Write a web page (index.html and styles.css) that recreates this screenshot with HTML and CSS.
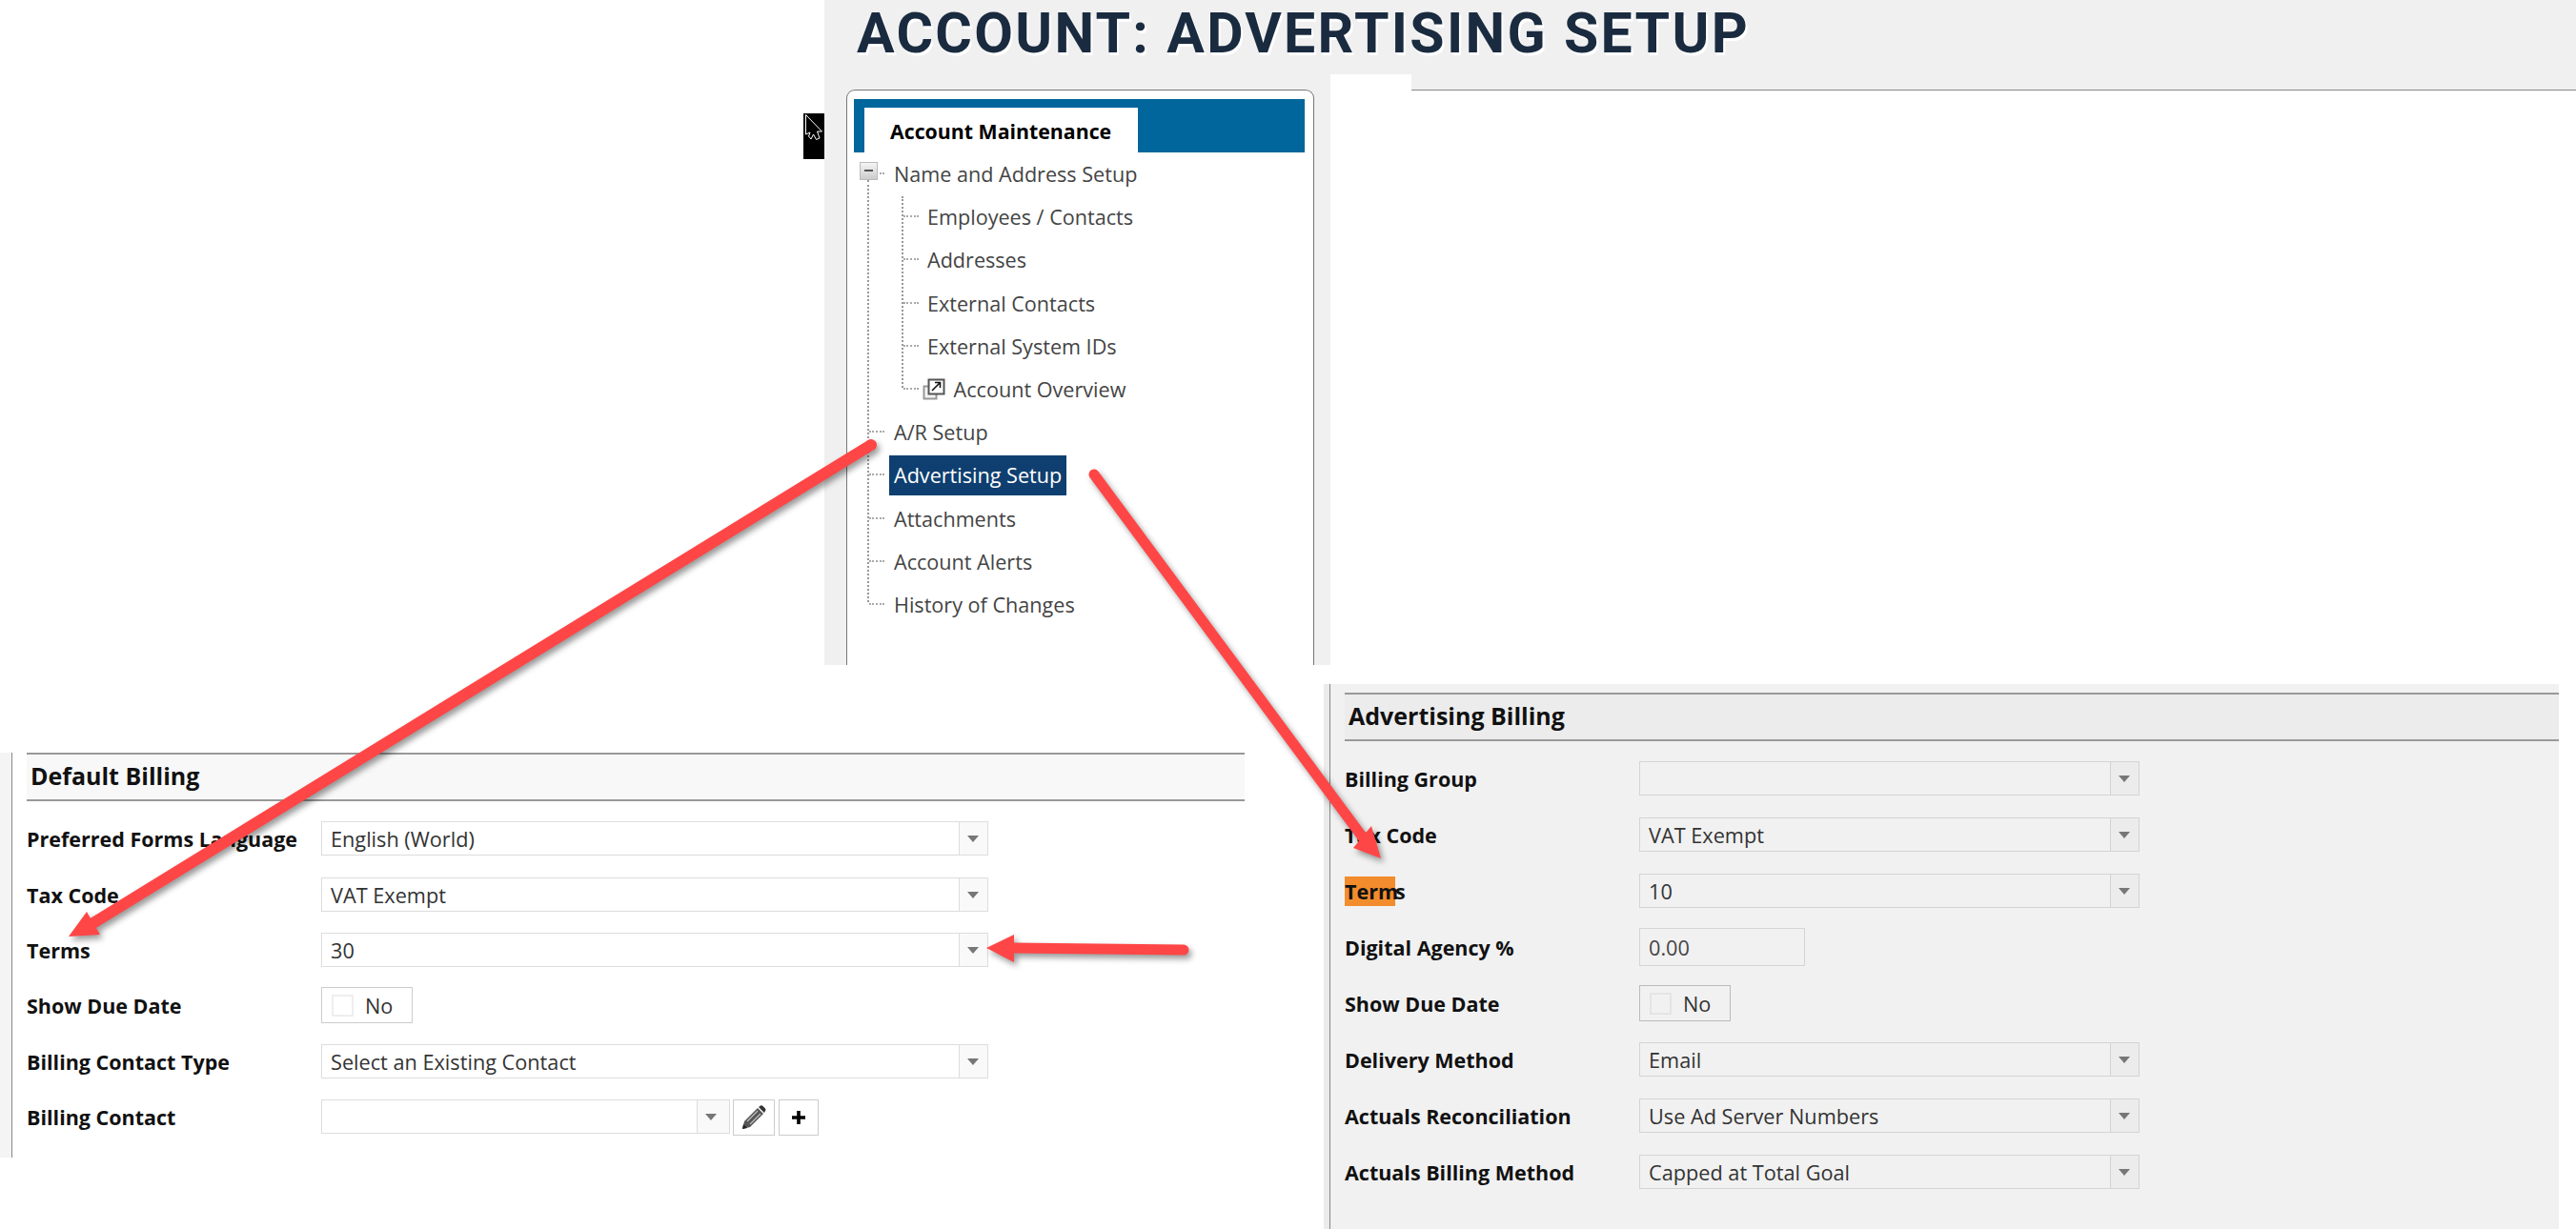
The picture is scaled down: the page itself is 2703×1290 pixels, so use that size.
FILE: index.html
```html
<!DOCTYPE html>
<html lang="en">
<head>
    <meta charset="UTF-8" />
    <title>Account: Advertising Setup</title>
    <link rel="stylesheet" href="styles.css">
</head>
<body>
<div class="page">

    <div class="top">
        <div class="cursor-strip">
            <svg width="22" height="48" viewBox="0 0 22 48">
                <path d="M2.5 1.5 L19.5 19 L14.5 19 L17 26 L13.5 27.5 L10.5 22 L8 27 L5.5 24 L7 20 L2.5 22 Z" fill="#000" stroke="#fff" stroke-width="1"/>
            </svg>
        </div>
        <div class="shot">
            <h1 class="title">ACCOUNT: ADVERTISING SETUP</h1>
            <div class="shot-body">
                <div class="side">
                    <div class="card">
                        <div class="card-head"><div class="card-tab">Account Maintenance</div></div>
                        <ul class="tree">
                            <li>
                                <span class="toggle"></span>
                                Name and Address Setup
                            </li>
                            <li class="sub-holder">
                                <ul class="sub">
                                    <li>Employees / Contacts</li>
                                    <li>Addresses</li>
                                    <li>External Contacts</li>
                                    <li>External System IDs</li>
                                    <li class="with-icon">
                                        <svg width="25" height="23" viewBox="0 0 25 23">
                                            <rect x="1.5" y="8.5" width="13" height="13" fill="#f4f4f4" stroke="#999" stroke-width="2"/>
                                            <rect x="6.5" y="1.5" width="16" height="15" fill="#fff" stroke="#555" stroke-width="2"/>
                                            <path d="M10 13 L18 5 M13 4.5 H18.5 V10" fill="none" stroke="#111" stroke-width="1.6"/>
                                        </svg>
                                        Account Overview
                                    </li>
                                </ul>
                            </li>
                            <li>A/R Setup</li>
                            <li><span class="selected">Advertising Setup</span></li>
                            <li>Attachments</li>
                            <li>Account Alerts</li>
                            <li>History of Changes</li>
                        </ul>
                    </div>
                </div>
                <div class="content">
                    <div class="content-tab"></div>
                    <div class="content-rest"></div>
                </div>
            </div>
        </div>
    </div>

    <div class="bottom">
        <div class="left-col">
            <div class="form form-default">
                <div class="form-head">Default Billing</div>
                <div class="rows">
                    <div class="row">
                        <label>Preferred Forms Language</label>
                        <div class="select"><span>English (World)</span><i class="drop"></i></div>
                    </div>
                    <div class="row">
                        <label>Tax Code</label>
                        <div class="select"><span>VAT Exempt</span><i class="drop"></i></div>
                    </div>
                    <div class="row">
                        <label>Terms</label>
                        <div class="select"><span>30</span><i class="drop"></i></div>
                    </div>
                    <div class="row">
                        <label>Show Due Date</label>
                        <div class="switch"><b></b>No</div>
                    </div>
                    <div class="row">
                        <label>Billing Contact Type</label>
                        <div class="select"><span>Select an Existing Contact</span><i class="drop"></i></div>
                    </div>
                    <div class="row">
                        <label>Billing Contact</label>
                        <div class="select select-short"><span></span><i class="drop"></i></div>
                        <button class="icon-btn btn-edit">
                            <svg width="26" height="26" viewBox="0 0 26 26">
                                <path d="M1 25 L3 17 L17 3 L23 9 L9 23 Z" fill="#555"/>
                                <path d="M18 2 L20 0.5 Q21.5 0 22.5 1 L25 3.5 Q26 5 25 6 L24 8 Z" fill="#333"/>
                                <path d="M6 17 L17 6 M9 20 L20 9" stroke="#bbb" stroke-width="1.4"/>
                                <path d="M1 25 L2 20 L6 24 Z" fill="#222"/>
                            </svg>
                        </button>
                        <button class="icon-btn btn-add">
                            <svg width="16" height="16" viewBox="0 0 16 16">
                                <path d="M8 1 V15 M1 8 H15" stroke="#000" stroke-width="3.6"/>
                            </svg>
                        </button>
                    </div>
                </div>
            </div>
        </div>
        <div class="right-col">
            <div class="form-head">Advertising Billing</div>
            <div class="rows">
                <div class="row">
                    <label>Billing Group</label>
                    <div class="select"><span></span><i class="drop"></i></div>
                </div>
                <div class="row">
                    <label>Tax Code</label>
                    <div class="select"><span>VAT Exempt</span><i class="drop"></i></div>
                </div>
                <div class="row">
                    <label><mark>Term</mark>s</label>
                    <div class="select"><span>10</span><i class="drop"></i></div>
                </div>
                <div class="row">
                    <label>Digital Agency %</label>
                    <div class="input-box">0.00</div>
                </div>
                <div class="row">
                    <label>Show Due Date</label>
                    <div class="switch"><b></b>No</div>
                </div>
                <div class="row">
                    <label>Delivery Method</label>
                    <div class="select"><span>Email</span><i class="drop"></i></div>
                </div>
                <div class="row">
                    <label>Actuals Reconciliation</label>
                    <div class="select"><span>Use Ad Server Numbers</span><i class="drop"></i></div>
                </div>
                <div class="row">
                    <label>Actuals Billing Method</label>
                    <div class="select"><span>Capped at Total Goal</span><i class="drop"></i></div>
                </div>
            </div>
        </div>
    </div>

    <!-- red callout arrows drawn over the screenshots -->
    <svg class="arrows" width="2703" height="1290" viewBox="0 0 2703 1290">
        <g class="arrow">
            <path d="M914 467 L96 970" stroke="#ff4646" stroke-width="12" stroke-linecap="round" fill="none"/>
            <path d="M72 983 L91 957 L105 981 Z" fill="#ff4646"/>
        </g>
        <g class="arrow">
            <path d="M1148 498 L1430 879" stroke="#ff4646" stroke-width="11" stroke-linecap="round" fill="none"/>
            <path d="M1449 901 L1420 890 L1439 867 Z" fill="#ff4646"/>
        </g>
        <g class="arrow">
            <path d="M1242 997 L1062 995" stroke="#ff4646" stroke-width="11" stroke-linecap="round" fill="none"/>
            <path d="M1035 995 L1064 981 L1064 1010 Z" fill="#ff4646"/>
        </g>
    </svg>
</div>
</body>
</html>
```

FILE: styles.css
```css
* {
  box-sizing: border-box;
}
body {
  margin: 0;
  background: #fff;
  font-family: "Open Sans", "Noto Sans", sans-serif;
  color: #333;
}
.page {
  position: relative;
  width: 2703px;
  height: 1290px;
  overflow: hidden;
}

/* top screenshot */
.top {
  display: flex;
  height: 698px;
  padding-left: 843px;
}
.cursor-strip {
  width: 22px;
  height: 48px;
  margin-top: 119px;
  background: #000;
}
.cursor-strip svg {
  display: block;
}
.shot {
  flex: 1;
  background: #f0f0f0;
}
.title {
  height: 94px;
  margin: 0;
  padding-left: 34px;
  font-family: Roboto, "Open Sans", sans-serif;
  font-size: 59px;
  font-weight: 700;
  letter-spacing: 2.3px;
  line-height: 70px;
  color: #1a2b40;
  text-shadow: 2px 3px 0 #fff;
  white-space: nowrap;
}
.shot-body {
  display: flex;
  height: 604px;
}
.side {
  width: 531px;
  padding-left: 23px;
}
.card {
  width: 491px;
  height: 604px;
  background: #fff;
  border: 1px solid #777;
  border-bottom: none;
  border-radius: 9px 9px 0 0;
  padding-top: 9px;
}
.card-head {
  height: 56px;
  margin: 0 9px 0 7px;
  padding: 9px 0 0 11px;
  background: #00669b;
}
.card-tab {
  width: 287px;
  height: 47px;
  padding-left: 27px;
  background: #fff;
  color: #000;
  font-size: 21.3px;
  font-weight: 700;
  line-height: 50px;
}
.content {
  flex: 1;
  display: flex;
  background: #fff;
}
.content-tab {
  width: 85px;
  height: 16px;
  margin-top: -16px;
  background: #fff;
}
.content-rest {
  flex: 1;
  border-top: 1px solid #888;
}

/* tree menu */
.tree, .sub {
  list-style: none;
  margin: 0;
  padding: 0;
  position: relative;
}
.tree {
  margin-left: 21px;
  font-size: 21.6px;
  color: #444;
}
.tree::before {
  content: "";
  position: absolute;
  left: 0;
  top: 29px;
  height: 443px;
  border-left: 2px dotted #999;
}
.tree li {
  position: relative;
  height: 45.2px;
  padding-left: 28px;
  line-height: 46px;
  white-space: nowrap;
}
.tree li::before {
  content: "";
  position: absolute;
  left: 2px;
  top: 21px;
  width: 16px;
  border-top: 2px dotted #aaa;
}
.tree .sub-holder {
  height: auto;
  padding-left: 36px;
}
.tree .sub-holder::before {
  display: none;
}
.sub::before {
  content: "";
  position: absolute;
  left: 0;
  top: 1px;
  height: 201px;
  border-left: 2px dotted #999;
}
.sub li {
  padding-left: 27px;
}
.tree .with-icon {
  padding-left: 22px;
}
.with-icon svg {
  vertical-align: -3px;
  margin-right: 2px;
}
.toggle {
  position: absolute;
  left: -8px;
  top: 10px;
  width: 19px;
  height: 19px;
  background: linear-gradient(#f4f4f4, #ccc);
  border: 1px solid #bbb;
}
.toggle::after {
  content: "";
  position: absolute;
  left: 4px;
  top: 7px;
  width: 9px;
  height: 2px;
  background: #555;
}
.selected {
  display: inline-block;
  height: 42px;
  margin-left: -5px;
  padding: 0 5px;
  line-height: 42px;
  background: #0f3f70;
  color: #fff;
}

/* billing forms */
.bottom {
  display: flex;
  margin-top: 20px;
  height: 572px;
}
.left-col {
  width: 1389px;
  padding-top: 72px;
}
.form-default {
  height: 425px;
  padding-left: 15px;
  margin-left: 12px;
  border-left: 1px solid #888;
  box-shadow: -12px 0 0 #f4f4f4;
  width: 1294px;
}
.form-head {
  height: 51px;
  padding-left: 4px;
  font-size: 25px;
  font-weight: 700;
  line-height: 45px;
  color: #111;
  background: #f8f8f8;
  border-top: 2px solid #999;
  border-bottom: 2px solid #999;
}
.rows {
  padding-top: 10px;
}
.row {
  display: flex;
  align-items: center;
  height: 58.4px;
}
.row label {
  width: 309px;
  font-size: 21.5px;
  font-weight: 700;
  color: #111;
  padding-top: 1px;
  white-space: nowrap;
}
.select {
  display: flex;
  width: 700px;
  height: 36px;
  background: #fff;
  border: 1px solid #ddd;
}
.select span {
  flex: 1;
  padding-left: 9px;
  font-size: 21.7px;
  line-height: 35px;
  color: #333;
}
.drop {
  position: relative;
  width: 30px;
  background: #f9f9f9;
  border-left: 1px solid #ddd;
}
.drop::after {
  content: "";
  position: absolute;
  left: 8px;
  top: 14px;
  border-left: 6px solid transparent;
  border-right: 6px solid transparent;
  border-top: 7px solid #777;
}
.select-short {
  width: 429px;
}
.select-short .drop {
  width: 34px;
}
.switch {
  display: flex;
  align-items: center;
  width: 96px;
  height: 38px;
  padding-left: 10px;
  font-size: 21.7px;
  color: #333;
  background: #fff;
  border: 1px solid #ccc;
}
.switch b {
  width: 23px;
  height: 23px;
  margin-right: 12px;
  border: 2px solid #eee;
}
.icon-btn {
  display: flex;
  align-items: center;
  justify-content: center;
  height: 38px;
  padding: 0;
  background: #fff;
  border: 1px solid #ccc;
  margin-top: 2px;
}
.btn-edit {
  width: 44px;
  margin-left: 3px;
}
.btn-add {
  width: 42px;
  margin-left: 4px;
}

/* right panel, greyed out */
.right-col {
  width: 1290px;
  height: 572px;
  margin-left: 6px;
  padding: 9px 0 0 15px;
  background: #f1f1f1;
  border-left: 1px solid #888;
  box-shadow: -6px 0 0 #ebebeb;
}
.right-col .form-head {
  background: #ececec;
}
.right-col .rows {
  padding-top: 10px;
}
.right-col .row {
  height: 58.9px;
}
.right-col .select {
  width: 525px;
  background: #f1f1f1;
  border-color: #d4d4d4;
}
.right-col .drop {
  background: #ececec;
  border-left-color: #d4d4d4;
}
.right-col .switch {
  width: 96px;
  background: #f1f1f1;
  border-color: #bbb;
}
.right-col .switch b {
  border-color: #e4e4e4;
}
.input-box {
  width: 174px;
  height: 40px;
  padding-left: 9px;
  font-size: 21.7px;
  line-height: 39px;
  color: #444;
  border: 1px solid #d4d4d4;
}
mark {
  display: inline-block;
  width: 53px;
  height: 31px;
  line-height: 31px;
  white-space: nowrap;
  background: #f28c2c;
  color: #111;
}

/* overlay */
.arrows {
  position: absolute;
  left: 0;
  top: 0;
  pointer-events: none;
}
.arrow {
  filter: drop-shadow(3px 4px 3px rgba(0,0,0,0.4));
}
```
